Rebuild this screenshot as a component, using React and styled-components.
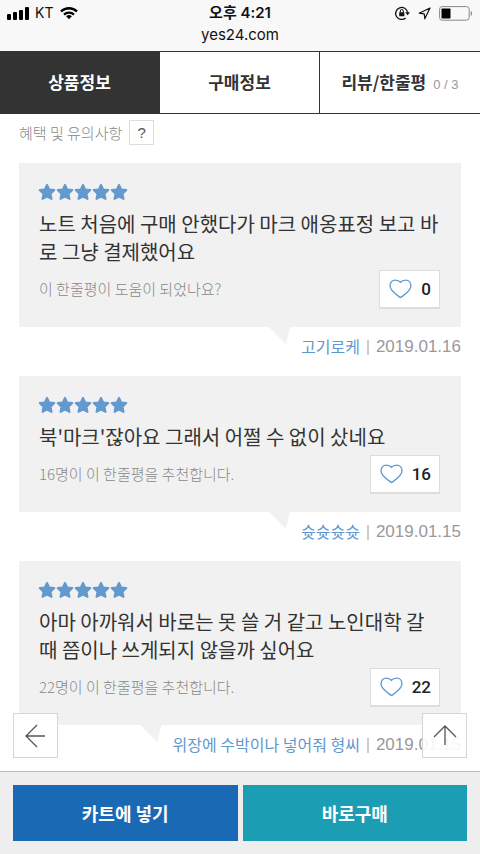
import { useRef, useState } from "react";
import styled, { createGlobalStyle } from "styled-components";

const GlobalStyle = createGlobalStyle`
  * {
    box-sizing: border-box;
  }

  body {
    margin: 0;
    background: #fff;
    color: #333;
    font-family: "Noto Sans CJK KR", sans-serif;
  }

  button {
    margin: 0;
    padding: 0;
    font-family: inherit;
    cursor: pointer;
  }
`;

const Page = styled.div`
  display: flex;
  flex-direction: column;
  height: 100vh;
`;

const StatusBar = styled.header`
  background: #f8f8f8;
  color: #111;
  padding-top: 3px;
  height: 51px;
  flex: none;
`;

const StatusRow = styled.div`
  display: grid;
  grid-template-columns: 1fr auto 1fr;
  align-items: center;
  height: 20px;
  padding: 0 7px;
`;

const Carrier = styled.div`
  display: flex;
  align-items: center;
  gap: 6px;
  font: 14px/20px Inter, sans-serif;
`;

const Clock = styled.time`
  font-family: Inter, "Noto Sans CJK KR", sans-serif;
  font-size: 15px;
  font-weight: 600;
  line-height: 20px;
`;

const StatusIcons = styled.div`
  display: flex;
  align-items: center;
  justify-content: flex-end;
  gap: 8px;
`;

const Address = styled.div`
  text-align: center;
  font: 15px/24px Inter, sans-serif;
`;

const Tabs = styled.nav`
  display: grid;
  grid-template-columns: repeat(3, 1fr);
  flex: none;
  height: 63px;
  border-top: 1px solid #333;
  border-bottom: 1px solid #333;
`;

const Tab = styled.button`
  padding-bottom: 2px;
  border: 0;
  border-right: ${({ $divided }) => ($divided ? "1px solid #333" : "0")};
  background: ${({ $active }) => ($active ? "#333" : "#fff")};
  color: ${({ $active }) => ($active ? "#fff" : "#333")};
  font-size: 17px;
  font-weight: 700;
`;

const TabCount = styled.span`
  margin-left: 7px;
  color: #999;
  font-family: "Liberation Sans", sans-serif;
  font-size: 13px;
  font-weight: 400;
`;

const Body = styled.div`
  position: relative;
  flex: 1;
  min-height: 0;
`;

const Content = styled.main`
  height: 100%;
  padding: 6px 19px 0;
  overflow-y: auto;
  scrollbar-width: none;
`;

const Notice = styled.div`
  display: flex;
  align-items: center;
  gap: 7px;
  margin-bottom: 18px;
  color: #888;
  font-size: 15px;
  font-weight: 300;
  line-height: 25px;
`;

const HelpButton = styled.button`
  width: 25px;
  height: 25px;
  border: 1px solid #ddd;
  background: #fff;
  color: #555;
  font-family: "Liberation Sans", sans-serif;
  font-size: 15px;
`;

const Card = styled.section`
  padding: 20px 20px 18px;
  background: #f1f1f1;
`;

const Stars = styled.div`
  display: flex;
  height: 18px;
  margin: 0 0 9px -1px;
`;

const ReviewText = styled.p`
  margin: 0;
  font-size: 20px;
  line-height: 28px;
`;

const CardFooter = styled.div`
  display: flex;
  align-items: center;
  justify-content: space-between;
  margin-top: 4px;
  color: #888;
  font-size: 15px;
  font-weight: 300;
`;

const HelpfulText = styled.span`
  padding-bottom: 2px;
`;

const LikeButton = styled.button`
  display: flex;
  align-items: center;
  gap: 9px;
  height: 39px;
  margin-right: 1px;
  padding: 0 8px 0 9px;
  border: 1px solid #ddd;
  border-bottom-width: 2px;
  background: #fff;
  color: #222;
  font-family: Roboto, sans-serif;
  font-size: 17px;
  font-weight: 500;
`;

const Meta = styled.div`
  display: flex;
  justify-content: flex-end;
  height: 49px;
  font-size: 16px;
  line-height: 38px;
`;

const Tail = styled.span`
  width: 21px;
  height: 17px;
  margin-right: 11px;
  background: #f1f1f1;
  clip-path: polygon(0 0, 100% 0, 80% 100%);
`;

const Author = styled.a`
  color: #5f98d0;
  text-decoration: none;
`;

const PostedOn = styled.time`
  display: flex;
  align-items: center;
  height: 40px;
  color: #999;
  font-family: "Liberation Sans", sans-serif;
  font-size: 17px;

  &::before {
    content: "";
    width: 2px;
    height: 15px;
    margin: 0 7px;
    background: #ccc;
  }
`;

const FloatingButton = styled.button`
  position: absolute;
  bottom: 13px;
  ${({ $side }) => $side}: 13px;
  display: flex;
  align-items: center;
  justify-content: center;
  width: 45px;
  height: 45px;
  border: 1px solid #d5d5d5;
  background: rgba(255, 255, 255, 0.9);
`;

const ActionBar = styled.footer`
  display: grid;
  grid-template-columns: 1fr 1fr;
  gap: 5px;
  flex: none;
  padding: 13px;
  border-top: 1px solid #bbb;
  background: #eee;
`;

const ActionButton = styled.button`
  height: 56px;
  border: 0;
  background: ${({ $color }) => $color};
  color: #fff;
  font-size: 18px;
  font-weight: 700;
`;

const REVIEWS = [
  {
    text: "노트 처음에 구매 안했다가 마크 애옹표정 보고 바로 그냥 결제했어요",
    likes: 0,
    author: "고기로케",
    date: "2019.01.16",
  },
  {
    text: "북'마크'잖아요 그래서 어쩔 수 없이 샀네요",
    likes: 16,
    author: "슛슛슛슛",
    date: "2019.01.15",
  },
  {
    text: "아마 아까워서 바로는 못 쓸 거 같고 노인대학 갈 때 쯤이나 쓰게되지 않을까 싶어요",
    likes: 22,
    author: "위장에 수박이나 넣어줘 형씨",
    date: "2019.01.15",
  },
];

const TABS = ["상품정보", "구매정보", "리뷰/한줄평"];

function SignalIcon() {
  return (
    <svg width="22" height="13" viewBox="0 0 22 13" fill="#000">
      <rect x="0" y="7" width="4" height="6" rx="1" />
      <rect x="6" y="5" width="4" height="8" rx="1" />
      <rect x="12" y="3" width="4" height="10" rx="1" />
      <rect x="18" y="0" width="4" height="13" rx="1" />
    </svg>
  );
}

function WifiIcon() {
  return (
    <svg width="20" height="14" viewBox="0 0 20 14" fill="none" stroke="#000">
      <path d="M2 5.5a11.5 11.5 0 0 1 16 0" strokeWidth="2.4" />
      <path d="M5 8.6a7.2 7.2 0 0 1 10 0" strokeWidth="2.2" />
      <path d="M10 13.2l-2.9-2.9a4.2 4.2 0 0 1 5.8 0z" fill="#000" stroke="none" />
    </svg>
  );
}

function RotationLockIcon() {
  return (
    <svg width="15" height="14" viewBox="0 0 15 14" fill="none" stroke="#111">
      <path d="M10.6 12A6 6 0 1 1 12.6 6.5" strokeWidth="1.3" />
      <path d="M10.2 6.3h4.8l-2.4 3z" fill="#111" stroke="none" />
      <rect x="4.2" y="6.2" width="5.2" height="4" rx="0.5" fill="#111" stroke="none" />
      <path d="M5.3 6.5V5a1.5 1.5 0 0 1 3 0v1.5" />
    </svg>
  );
}

function LocationIcon() {
  return (
    <svg width="13" height="13" viewBox="0 0 13 13" fill="none" stroke="#111">
      <path d="M12 1L1.2 6.2l5 .6.6 5z" strokeWidth="1.2" strokeLinejoin="round" />
    </svg>
  );
}

function BatteryIcon() {
  return (
    <svg width="34" height="15" viewBox="0 0 34 15">
      <rect x="0.6" y="0.6" width="29.6" height="13.6" rx="2.6" fill="none" stroke="#888" />
      <rect x="2.5" y="2.5" width="9" height="10" rx="0.8" fill="#000" />
      <path d="M31.7 5v5c1.8-.6 1.8-4.4 0-5z" fill="#888" />
    </svg>
  );
}

function StarIcon() {
  return (
    <svg width="18" height="18" viewBox="0 0 18 18">
      <path
        d="M9 1.9l2.2 4.5 5.1.7-3.8 3.7 1 5.100-4.500-2.300-4.500 2.300 1-5.100L1.700 7.100l5.100-.7z"
        fill="#6399cf"
        stroke="#6399cf"
        strokeWidth="2"
        strokeLinejoin="round"
      />
    </svg>
  );
}

function HeartIcon() {
  return (
    <svg width="23" height="20" viewBox="0 0 24 21" fill="none" stroke="#5f98d0">
      <path
        d="M12 19.5C7.5 16.3 1 12.7 1 7.2 1 3.6 3.3 1.1 6.5 1.1c2.5 0 4.5 1.1 5.500 2.500 1-1.400 3-2.500 5.500-2.500C20.700 1.100 23 3.600 23 7.200c0 5.500-6.500 9.100-11 12.300z"
        strokeWidth="1.4"
        strokeLinejoin="round"
      />
    </svg>
  );
}

function ArrowIcon({ direction }) {
  return (
    <svg width="24" height="24" viewBox="0 0 24 24" fill="none" stroke="#555" strokeWidth="1.3">
      {direction === "left" ? (
        <path d="M21 12H2M13 1L2 12l11 11" />
      ) : (
        <path d="M12 21V2M1 13L12 2l11 11" />
      )}
    </svg>
  );
}

function Review({ review }) {
  const [liked, setLiked] = useState(false);
  const { text, likes, author, date } = review;

  return (
    <article>
      <Card>
        <Stars role="img" aria-label="별점 5점">
          {[1, 2, 3, 4, 5].map((star) => (
            <StarIcon key={star} />
          ))}
        </Stars>
        <ReviewText>{text}</ReviewText>
        <CardFooter>
          <HelpfulText>
            {likes > 0
              ? `${likes}명이 이 한줄평을 추천합니다.`
              : "이 한줄평이 도움이 되었나요?"}
          </HelpfulText>
          <LikeButton aria-pressed={liked} onClick={() => setLiked(!liked)}>
            <HeartIcon />
            {likes + (liked ? 1 : 0)}
          </LikeButton>
        </CardFooter>
      </Card>
      <Meta>
        <Tail />
        <Author href="#author">{author}</Author>
        <PostedOn>{date}</PostedOn>
      </Meta>
    </article>
  );
}

function App() {
  const [activeTab, setActiveTab] = useState(0);
  const contentRef = useRef(null);

  return (
    <Page>
      <GlobalStyle />
      <StatusBar>
        <StatusRow>
          <Carrier>
            <SignalIcon />
            KT
            <WifiIcon />
          </Carrier>
          <Clock>오후 4:21</Clock>
          <StatusIcons>
            <RotationLockIcon />
            <LocationIcon />
            <BatteryIcon />
          </StatusIcons>
        </StatusRow>
        <Address>yes24.com</Address>
      </StatusBar>

      <Tabs>
        {TABS.map((label, index) => (
          <Tab
            key={label}
            $active={index === activeTab}
            $divided={index < TABS.length - 1}
            onClick={() => setActiveTab(index)}
          >
            {label}
            {index === 2 && <TabCount>0 / 3</TabCount>}
          </Tab>
        ))}
      </Tabs>

      <Body>
        <Content ref={contentRef}>
          <Notice>
            혜택 및 유의사항
            <HelpButton>?</HelpButton>
          </Notice>
          {REVIEWS.map((review) => (
            <Review key={review.author} review={review} />
          ))}
        </Content>
        <FloatingButton
          $side="left"
          aria-label="뒤로"
          onClick={() => window.history.back()}
        >
          <ArrowIcon direction="left" />
        </FloatingButton>
        <FloatingButton
          $side="right"
          aria-label="맨 위로"
          onClick={() => contentRef.current.scrollTo({ top: 0 })}
        >
          <ArrowIcon direction="up" />
        </FloatingButton>
      </Body>

      <ActionBar>
        <ActionButton $color="#1a69b4">카트에 넣기</ActionButton>
        <ActionButton $color="#1b9db3">바로구매</ActionButton>
      </ActionBar>
    </Page>
  );
}

export default App;
